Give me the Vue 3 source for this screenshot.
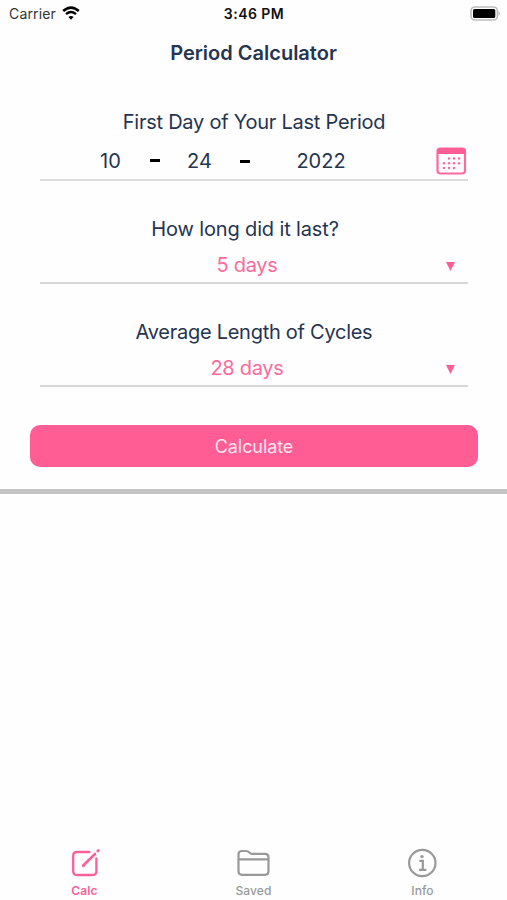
<script setup>
const date = { month: '10', day: '24', year: '2022' }
const fields = [
  { id: 'duration', label: 'How long did it last?', value: '5 days' },
  { id: 'cycle', label: 'Average Length of Cycles', value: '28 days' }
]
const dots = [
  [14, 11], [19, 11], [24, 11],
  [9, 15.7], [14, 15.7], [19, 15.7], [24, 15.7],
  [9, 20.4], [14, 20.4], [19, 20.4]
]
</script>

<template>
  <div class="screen">
    <header class="status">
      <div class="carrier">
        <span>Carrier</span>
        <svg width="18" height="14" viewBox="0 0 18 14">
          <path d="M1.2 5Q9 -1.8 16.8 5" fill="none" stroke="#000" stroke-width="2.7" />
          <path d="M4 8.2Q9 4 14 8.2" fill="none" stroke="#000" stroke-width="2.4" />
          <path d="M6.4 11Q9 8.8 11.6 11L9 13.7Z" fill="#000" />
        </svg>
      </div>
      <span class="clock">3:46 PM</span>
      <svg class="battery" width="31" height="15" viewBox="0 0 31 15">
        <rect x="1" y="1" width="26.4" height="13" rx="4" fill="#fff" stroke="#bdbdbd" stroke-width="1.6" />
        <rect x="3" y="3" width="22.3" height="9" rx="1.6" fill="#000" />
        <path d="M28.6 5Q30.8 7.5 28.6 10Z" fill="#aaa" />
      </svg>
    </header>
    <h1 class="title"><span>Period Calculator</span></h1>

    <main class="form">
      <section class="field date-field">
        <h2 class="label first">First Day of Your Last Period</h2>
        <div class="date-row">
          <span class="num">{{ date.month }}</span>
          <i class="dash"></i>
          <span class="num">{{ date.day }}</span>
          <i class="dash low"></i>
          <span class="num year">{{ date.year }}</span>
          <svg class="calendar" width="31" height="28" viewBox="0 0 31 28">
            <rect x="1.5" y="1.5" width="27.5" height="25" rx="3" fill="#fff" stroke="#ff6a9c" stroke-width="2.2" />
            <path d="M1 7V4Q1 1 4 1H26.5Q29.5 1 29.5 4V7Z" fill="#ff5d94" />
            <circle v-for="([x, y], i) in dots" :key="i" :cx="x - 1" :cy="y + 0.5" r="1.25" fill="#ff6a9c" />
          </svg>
        </div>
      </section>
      <section v-for="f in fields" :key="f.id" class="field select-field">
        <h2 class="label" :class="f.id">{{ f.label }}</h2>
        <div class="select">
          <span class="value">{{ f.value }}</span>
          <svg class="arrow" width="9" height="9" viewBox="0 0 9 9">
            <path d="M0 0H9L4.5 9Z" fill="#ff5d94" />
          </svg>
        </div>
      </section>
      <button class="calculate"><span>Calculate</span></button>
    </main>
    <div class="divider"></div>

    <nav class="tabs">
      <div class="tab active">
        <svg width="32" height="32" viewBox="0 0 32 32" fill="none" stroke="currentColor" stroke-width="2.3" stroke-linecap="round" stroke-linejoin="round">
          <path d="M20.5 5H8Q4.200 5 4.200 8.800V24.300Q4.200 28 8 28H23.500Q27.400 28 27.400 24.300V11.500" />
          <path d="M14.500 18.300L26 7" stroke-width="2.600" />
          <path d="M13.300 19.600L14 17L16 19Z" fill="currentColor" stroke-width=".6" />
          <path d="M28.800 3.900L29.300 3.400" stroke-width="2.800" />
        </svg>
        <span>Calc</span>
      </div>
      <div class="tab">
        <svg width="34" height="32" viewBox="0 0 34 32" fill="none" stroke="currentColor" stroke-width="2.2" stroke-linejoin="round">
          <path d="M1.500 24.300V7.500Q1.500 4 5 4H9.100Q10.800 4 12 5.200L12.900 6Q13.800 6.900 15.300 6.900H28Q31.500 6.900 31.500 10.400V24.300Q31.500 27.800 28 27.800H5Q1.500 27.800 1.500 24.300ZM1.500 12.300H31.500" />
        </svg>
        <span>Saved</span>
      </div>
      <div class="tab">
        <svg width="32" height="32" viewBox="0 0 32 32" fill="none" stroke="currentColor" stroke-width="2.2">
          <circle cx="15.300" cy="16" r="13.200" />
          <circle cx="15" cy="9.600" r="1.700" fill="currentColor" stroke="none" />
          <path d="M12.300 13.900H15.800V22.500M11.900 22.800H19.300" />
        </svg>
        <span>Info</span>
      </div>
    </nav>
  </div>
</template>

<style>
body { background: #fff; }
</style>

<style scoped>
.screen {
  display: flex;
  flex-direction: column;
  width: 507px;
  height: 900px;
  overflow: hidden;
  background: #fefefe;
  color: #253450;
  font-family: Inter, "Liberation Sans", sans-serif;
}
.status {
  display: grid;
  grid-template-columns: 1fr auto 1fr;
  align-items: center;
  height: 27px;
  padding: 0 6px 0 9px;
  color: #111;
  font-size: 14px;
}
.carrier { display: flex; align-items: center; gap: 6px; color: #333; letter-spacing: .15px; }
.carrier svg { margin-top: -2px; }
.clock { padding-right: 2px; font-weight: 600; letter-spacing: .45px; }
.battery { justify-self: end; }
.title {
  height: 50px;
  margin: 0;
  font-size: 20px;
  line-height: 52px;
  font-weight: 600;
  text-align: center;
}
.form { padding: 32px 30px 22px; }
.field { margin: 0 9px 0 10px; }
.label {
  margin: 0;
  font-size: 20px;
  line-height: 26px;
  font-weight: 400;
  text-align: center;
  letter-spacing: -.14px;
}
.label.first { letter-spacing: -.25px; }
.label.cycle { letter-spacing: -.27px; }
.label.duration { padding-right: 18px; }
.date-row {
  display: grid;
  grid-template-columns: 51px 38px 51px 39px 114px 1fr;
  align-items: center;
  height: 37px;
  padding: 7px 0 0 45px;
  border-bottom: 2px solid #dcdcdc;
}
.num { font-size: 20px; text-align: center; line-height: 24px; }
.dash { justify-self: center; width: 10px; height: 3px; margin-top: -1px; background: #000; }
.dash.low { margin-top: 2px; }
.calendar { justify-self: end; margin-right: 1.5px; }
.select-field { padding-top: 35px; }
.select {
  display: grid;
  grid-template-columns: 1fr auto 1fr;
  align-items: center;
  height: 35px;
  padding-top: 5px;
  border-bottom: 2px solid #d8d8d8;
  color: #ff6a9b;
  font-size: 20px;
}
.value { grid-column: 2; padding-right: 14px; letter-spacing: -.3px; }
.arrow { justify-self: end; margin-right: 13.5px; margin-top: 3px; }
.calculate {
  display: block;
  width: 448px;
  height: 42px;
  margin: 38px 0 0;
  padding: 0;
  border: 0;
  border-radius: 10px;
  background: #ff5d94;
  color: #ffe3ee;
  font: 400 18px/44px Inter, sans-serif;
  letter-spacing: -.08px;
}
.divider { height: 5px; background: #c4c4c4; }
.tabs {
  display: grid;
  grid-template-columns: repeat(3, 169px);
  margin-top: auto;
  height: 53px;
}
.tab {
  display: flex;
  flex-direction: column;
  align-items: center;
  color: #999;
  font-size: 12px;
  line-height: 16px;
  font-weight: 500;
}
.tab span { margin-top: 4px; letter-spacing: .1px; }
.active { color: #f9619a; }
.active span { font-weight: 600; }
</style>
